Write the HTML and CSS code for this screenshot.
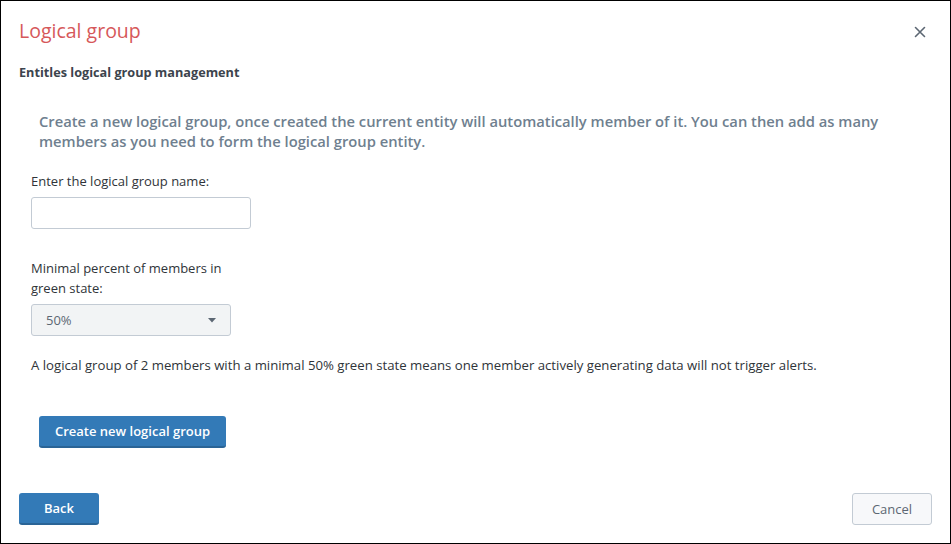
FILE: index.html
```html
<!DOCTYPE html>
<html>
<head>
<meta charset="utf-8">
<link rel="stylesheet" href="styles.css">
</head>
<body>
<div class="modal">
  <div class="header">
    <h1 class="title">Logical group</h1>
    <button class="close" aria-label="Close">
      <svg width="12" height="12" viewBox="0 0 12 12"><path d="M1.5 1.5L10.5 10.5M10.5 1.5L1.5 10.5" stroke="#5c6773" stroke-width="1.6" stroke-linecap="round"/></svg>
    </button>
  </div>
  <div class="body">
    <h2 class="subtitle">Entitles logical group management</h2>
    <p class="intro">Create a new logical group, once created the current entity will automatically member of it. You can then add as many members as you need to form the logical group entity.</p>
    <div class="form">
      <label class="label">Enter the logical group name:</label>
      <input class="text-input" type="text">
      <label class="label label-wrap">Minimal percent of members in green state:</label>
      <div class="select">
        <span>50%</span>
        <svg width="8" height="5" viewBox="0 0 8 5"><path d="M0 0H8L4 4.5Z" fill="#5c6773"/></svg>
      </div>
      <p class="note">A logical group of 2 members with a minimal 50% green state means one member actively generating data will not trigger alerts.</p>
    </div>
    <button class="btn btn-primary btn-create">Create new logical group</button>
  </div>
  <div class="footer">
    <button class="btn btn-primary btn-back">Back</button>
    <button class="btn btn-default">Cancel</button>
  </div>
</div>
</body>
</html>
```
FILE: styles.css
```css
html, body {
  margin: 0;
  padding: 0;
  background: #fff;
}
body {
  font-family: "Open Sans", Lato, sans-serif;
  color: #2f3439;
}
.modal {
  width: 951px;
  height: 544px;
  box-sizing: border-box;
  border: 1px solid #000;
  display: flex;
  flex-direction: column;
  background: #fff;
}
.header {
  display: flex;
  align-items: center;
  justify-content: space-between;
  padding: 16px 24px 0 18px;
  height: 28px;
}
.title {
  margin: 0;
  font-size: 19.5px;
  font-weight: 500;
  color: #d6585a;
  line-height: 28px;
}
.close {
  border: 0;
  background: none;
  padding: 0;
  width: 12px;
  height: 12px;
  display: flex;
  margin-top: 2px;
}
.body {
  padding: 0 18px;
}
.subtitle {
  margin: 18px 0 0 0;
  font-size: 12.7px;
  font-weight: 700;
  line-height: 18px;
  color: #3c444d;
}
.intro {
  margin: 30px 0 0 20px;
  font-size: 14.75px;
  font-weight: 600;
  line-height: 20px;
  color: #6f7f8f;
}
.form {
  margin-left: 12px;
  display: flex;
  flex-direction: column;
  align-items: flex-start;
}
.label {
  margin-top: 20px;
  font-size: 13px;
  line-height: 20px;
}
.label-wrap {
  width: 200px;
  margin-top: 29px;
}
.text-input {
  margin-top: 6px;
  width: 220px;
  height: 32px;
  box-sizing: border-box;
  border: 1px solid #c3cbd4;
  border-radius: 3px;
  background: #fff;
}
.select {
  margin-top: 6px;
  width: 200px;
  height: 32px;
  box-sizing: border-box;
  border: 1px solid #c3cbd4;
  border-radius: 3px;
  background: #f2f4f5;
  display: flex;
  align-items: center;
  justify-content: space-between;
  padding: 0 14px 0 14px;
  font-size: 13px;
  color: #5c6773;
}
.note {
  margin: 19px 0 0 0;
  font-size: 13.2px;
  line-height: 20px;
}
.btn {
  font-family: inherit;
  font-size: 13px;
  font-weight: 600;
  height: 32px;
  border-radius: 3px;
  box-sizing: border-box;
  cursor: pointer;
}
.btn-primary {
  background: #337ab7;
  color: #fff;
  border: 0;
  border-bottom: 2px solid #2a6496;
}
.btn-create {
  margin: 41px 0 0 20px;
  width: 187px;
}
.footer {
  margin-top: auto;
  display: flex;
  justify-content: space-between;
  padding: 0 18px 18px 18px;
}
.btn-back {
  width: 80px;
}
.btn-default {
  width: 80px;
  background: #f7f8fa;
  border: 1px solid #c3cbd4;
  color: #5c6773;
  font-weight: 400;
}
```
